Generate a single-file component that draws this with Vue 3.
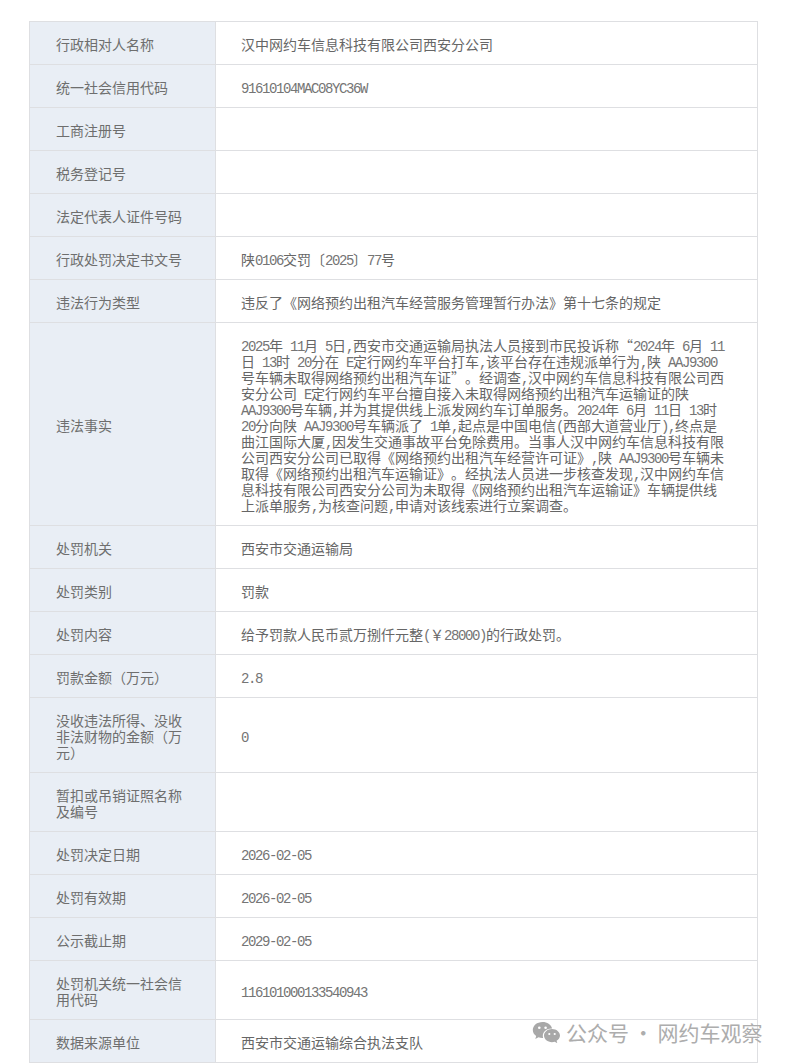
<script setup>
const rows = [
  ['行政相对人名称', '汉中网约车信息科技有限公司西安分公司'],
  ['统一社会信用代码', '91610104MAC08YC36W'],
  ['工商注册号', ''],
  ['税务登记号', ''],
  ['法定代表人证件号码', ''],
  ['行政处罚决定书文号', '陕0106交罚〔2025〕77号'],
  ['违法行为类型', '违反了《网络预约出租汽车经营服务管理暂行办法》第十七条的规定'],
  ['违法事实', '2025年 11月 5日,西安市交通运输局执法人员接到市民投诉称“2024年 6月 11日 13时 20分在 E定行网约车平台打车,该平台存在违规派单行为,陕 AAJ9300号车辆未取得网络预约出租汽车证”。经调查,汉中网约车信息科技有限公司西安分公司 E定行网约车平台擅自接入未取得网络预约出租汽车运输证的陕 AAJ9300号车辆,并为其提供线上派发网约车订单服务。2024年 6月 11日 13时 20分向陕 AAJ9300号车辆派了 1单,起点是中国电信(西部大道营业厅),终点是曲江国际大厦,因发生交通事故平台免除费用。当事人汉中网约车信息科技有限公司西安分公司已取得《网络预约出租汽车经营许可证》,陕 AAJ9300号车辆未取得《网络预约出租汽车运输证》。经执法人员进一步核查发现,汉中网约车信息科技有限公司西安分公司为未取得《网络预约出租汽车运输证》车辆提供线上派单服务,为核查问题,申请对该线索进行立案调查。'],
  ['处罚机关', '西安市交通运输局'],
  ['处罚类别', '罚款'],
  ['处罚内容', '给予罚款人民币贰万捌仟元整(\uFFE528000)的行政处罚。'],
  ['罚款金额\uFF08万元\uFF09', '2.8'],
  ['没收违法所得、没收非法财物的金额\uFF08万元\uFF09', '0'],
  ['暂扣或吊销证照名称及编号', ''],
  ['处罚决定日期', '2026-02-05'],
  ['处罚有效期', '2026-02-05'],
  ['公示截止期', '2029-02-05'],
  ['处罚机关统一社会信用代码', '116101000133540943'],
  ['数据来源单位', '西安市交通运输综合执法支队'],
]

// Latin runs sit in a half-width monospaced face, as in the source's SimSun
function segments(text) {
  return text.split(/([\x20-\x7e]+)/).filter(Boolean).map((t) => ({
    t,
    latin: /^[\x20-\x7e]+$/.test(t),
  }))
}
</script>

<template>
  <main class="page">
    <table class="sheet">
      <colgroup>
        <col class="col-label" />
        <col />
      </colgroup>
      <tbody>
        <tr v-for="row in rows" :key="row[0]">
          <th>{{ row[0] }}</th>
          <td>
            <template v-for="(s, i) in segments(row[1])" :key="i">
              <span v-if="s.latin" class="latin">{{ s.t }}</span>
              <template v-else>{{ s.t }}</template>
            </template>
          </td>
        </tr>
      </tbody>
    </table>
    <div class="mark">
      <svg class="mark-icon" width="29" height="22" viewBox="0 0 29 22" aria-hidden="true">
        <path d="M10.5 1C5 1 .8 4.6.8 9c0 2.500 1.300 4.600 3.400 6.100L3.300 18l3.200-1.700c1.200.4 2.500.6 3.800.6h.8a7 7 0 0 1-.3-2.100c0-4.100 3.800-7.400 8.700-7.400h.6C19.100 3.700 15.200 1 10.500 1z" fill="#a8a8a8"/>
        <path d="M28 14.600c0-3.700-3.600-6.600-8-6.600s-8 2.900-8 6.600 3.600 6.600 8 6.600c.9 0 1.900-.1 2.700-.4l2.600 1.400-.7-2.400c2-1.300 3.400-3.200 3.400-5.600z" fill="#a8a8a8"/>
        <circle cx="7.300" cy="6.800" r="1.300" fill="#fff"/>
        <circle cx="13.600" cy="6.800" r="1.300" fill="#fff"/>
        <circle cx="17.300" cy="13" r="1.100" fill="#fff"/>
        <circle cx="22.700" cy="13" r="1.100" fill="#fff"/>
      </svg>
      <span class="mark-text">公众号 · 网约车观察</span>
    </div>
  </main>
</template>

<style scoped>
.page {
  position: relative;
  width: 787px;
  height: 1063px;
  box-sizing: border-box;
  padding: 21px 29px 0;
  background: #fff;
  overflow: hidden;
  font-family: "Noto Sans CJK SC", "Liberation Sans", sans-serif;
}
.sheet {
  width: 729px;
  table-layout: fixed;
  border-collapse: collapse;
  font-size: 14px;
  line-height: 16px;
  color: #666;
  text-spacing-trim: space-all;
}
.col-label {
  width: 186px;
}
th,
td {
  padding: 14px 30px 12px 25px;
  border: 1px solid #dedfe2;
  text-align: left;
  vertical-align: middle;
  font-weight: 400;
}
th {
  padding-left: 26px;
  padding-right: 24px;
  background: #e9eef5;
  color: #6e6e6e;
}
.latin {
  font-family: "Liberation Mono", monospace;
  font-size: 14px;
  letter-spacing: -1.4px;
  line-height: 0;
  color: #757575;
  white-space: pre-wrap;
}
.mark {
  position: absolute;
  left: 532px;
  top: 1019px;
  display: flex;
  align-items: center;
  gap: 5px;
  font-size: 21px;
  line-height: 26px;
  color: #adadad;
  white-space: nowrap;
}
.mark-text {
  word-spacing: -1px;
}
</style>

<style>
html,
body {
  margin: 0;
  background: #fff;
  overflow: hidden;
}
</style>
